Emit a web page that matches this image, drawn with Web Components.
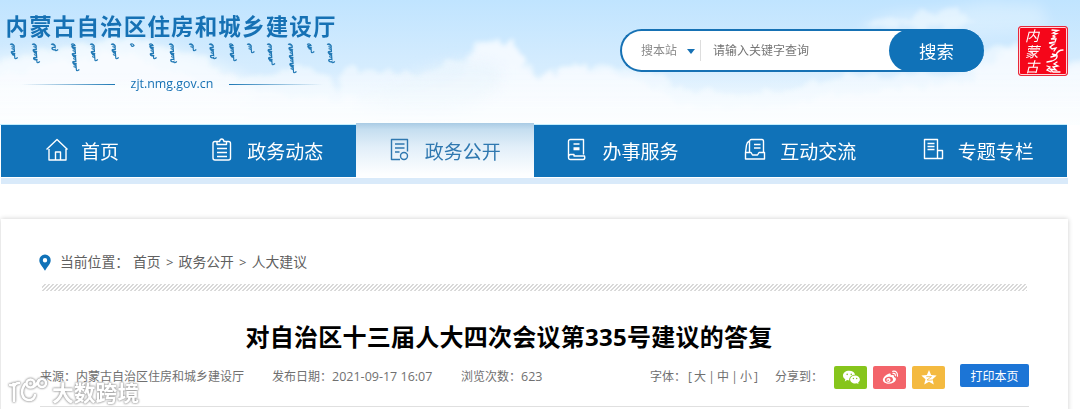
<!DOCTYPE html>
<html lang="zh-CN">
<head>
<meta charset="utf-8">
<title>内蒙古自治区住房和城乡建设厅</title>
<style>
	html, body { margin: 0; height: 100%; }
	body {
		overflow: hidden;
		background: #fff;
		color: #555;
		font-family: "Open Sans", "Noto Sans CJK SC", sans-serif;
		font-size: 12px;
	}
</style>
</head>
<body>
<gov-page></gov-page>

<script>
// Crea el shadow root abierto a partir de un bloque de estilos + markup
function montar(el, html) {
	el.attachShadow({ mode: 'open' });
	const t = document.createElement('template');
	t.innerHTML = html;
	el.shadowRoot.appendChild(t.content.cloneNode(true));
}

/* Cielo con nubes de la cabecera */
class SkyBackdrop extends HTMLElement {
	constructor() {
		super();
		montar(this, `
			<style>
				:host { display: block; position: relative; height: 125px; overflow: hidden; }
				svg { position: absolute; left: 0; top: 0; }
				.content { position: relative; }
			</style>
			<svg width="1080" height="125" viewBox="0 0 1080 125">
				<defs>
					<linearGradient id="sky" x1="0" y1="0" x2="0" y2="1">
						<stop offset="0" stop-color="#c0e4ff"/><stop offset=".45" stop-color="#d2ebfe"/><stop offset="1" stop-color="#e6f4ff"/>
					</linearGradient>
					<linearGradient id="base" x1="0" y1="0" x2="0" y2="1">
						<stop offset="0" stop-color="#fcfeff" stop-opacity="0"/><stop offset="1" stop-color="#fcfeff" stop-opacity=".9"/>
					</linearGradient>
					<filter id="cloud" x="-5%" y="-20%" width="110%" height="140%">
						<feTurbulence type="fractalNoise" baseFrequency=".07" numOctaves="4" seed="8"/>
						<feDisplacementMap in="SourceGraphic" scale="18" xChannelSelector="R" yChannelSelector="G"/>
						<feGaussianBlur stdDeviation="2"/>
					</filter>
					<filter id="soft" x="-20%" y="-40%" width="140%" height="180%"><feGaussianBlur stdDeviation="7"/></filter>
				</defs>
				<rect width="1080" height="125" fill="url(#sky)"/>
				<g filter="url(#soft)" fill="#fcfeff">
					<path opacity=".55" d="M-20 60L50 48L110 42L165 46L215 62L250 80L240 150L-20 150Z"/>
					<path opacity=".3" d="M855 32Q885 10 920 12Q960 8 985 2L1040 5L1050 30L980 34Z"/>
				</g>
				<g filter="url(#cloud)" fill="#fcfeff">
					<path opacity=".55" d="M-20 66L20 58L48 48L100 42L130 38L160 46L200 56L225 74L262 76L300 66L325 74L340 90L346 68L380 70L422 76L446 60L460 62L468 54L478 42L496 40L515 42L524 62L540 76L575 64L612 66L650 72L676 88L728 92L790 90L840 76L960 74L985 48L1012 43L1050 62L1100 64L1100 160L-20 160Z"/>
					<path opacity=".55" d="M-20 80L60 62L120 52L180 74L225 90L262 92L340 100L440 88L462 70L480 46L496 42L514 44L526 68L542 78L576 66L620 74L650 84L680 104L760 112L830 96L900 88L970 82L990 58L1014 50L1050 68L1100 70L1100 160L-20 160Z"/>
					<path opacity=".4" d="M862 26L884 16L900 24L924 12L956 10L976 18L960 28Z"/>
				</g>
				<path d="M400 80Q460 50 500 66Q510 95 450 115Q380 118 355 104Z" fill="#e8f4fd" opacity=".7" filter="url(#soft)"/>
				<rect y="70" width="1080" height="55" fill="url(#base)"/>
				<rect y="124" width="1067" height="1" fill="#c3eefd"/>
			</svg>
			<div class="content"><slot></slot></div>
		`);
	}
}
customElements.define('sky-backdrop', SkyBackdrop);

/* Escritura vertical: un tallo con dientes a la izquierda y cola a la derecha */
class MongolLine extends HTMLElement {
	constructor() {
		super();
		const palabras = [[13, 15], [35, 18], [54, 6], [74, 27], [93, 16], [114, 14], [133, 2], [152, 14], [172, 18],
			[192, 6], [212, 14], [232, 17], [250, 8], [270, 20], [291, 28], [310, 8], [330, 19]];
		let trazos = '';
		palabras.forEach(([x, h], n) => {
			let d = `M${x - 3} 1.500q3-1.500 4 1`;
			let y = 2.5;
			let i = n;
			while (y < h - 1) {
				d += i % 4 === 3 ? 'q-4-.500-3 1.500q1.500 1.500 3 .5' : 'l-2.700-1m2.700 1l.150 2';
				y += 2;
				i++;
			}
			trazos += d + (h > 4 ? 'q0 2.500 3 0' : 'q-2 2-3-.500');
		});
		montar(this, `
			<style>:host { display: block; height: 31px; } svg { display: block; }</style>
			<svg width="345" height="31" viewBox="0 0 345 31" fill="none" stroke="#2279b5" stroke-width="1.2"><path d="${trazos}"/></svg>
		`);
	}
}
customElements.define('mongol-line', MongolLine);

class SiteBrand extends HTMLElement {
	constructor() {
		super();
		montar(this, `
			<style>
				:host { display: block; width: 345px; padding-top: 12px; color: #1671b4; }
				h1 { margin: 0 0 1px 5.500px; font-size: 22.500px; line-height: 30px; letter-spacing: 1.150px; font-weight: 700; white-space: nowrap; }
				.url { display: flex; align-items: center; justify-content: center; gap: 16px; height: 20px; margin-left: -1px; font-size: 12.400px; line-height: 20px; }
				i { width: 94px; height: 1px; background: linear-gradient(90deg, transparent, #1d78b5); }
				i:last-child { transform: scaleX(-1); }
			</style>
			<h1>内蒙古自治区住房和城乡建设厅</h1>
			<mongol-line></mongol-line>
			<div class="url"><i></i><span>zjt.nmg.gov.cn</span><i></i></div>
		`);
	}
}
customElements.define('site-brand', SiteBrand);

class SearchBox extends HTMLElement {
	constructor() {
		super();
		montar(this, `
			<style>
				:host {
					display: flex; box-sizing: border-box; width: 364px; height: 43px;
					border: 2px solid #1671b4; border-right: 0; border-radius: 22px; background: #fff;
					align-items: center; line-height: 20px;
				}
				.scope { margin-left: 19px; color: #8b8b8b; }
				.arrow { margin: 1px 5px 0 10px; border: 4px solid transparent; border-top: 5px solid #1671b4; border-bottom: 0; }
				.sep { width: 1px; height: 21px; background: #ddd; }
				.hint { margin-left: 12px; color: #757575; flex: 1; }
				button {
					width: 95px; height: 43px; margin: 0; padding: 0; border: 0; border-radius: 22px;
					background: #1072b8; color: #fff; font: 17.5px/43px "Noto Sans CJK SC", sans-serif;
				}
			</style>
			<span class="scope">搜本站</span><span class="arrow"></span><span class="sep"></span>
			<span class="hint">请输入关键字查询</span>
			<button>搜索</button>
		`);
	}
}
customElements.define('search-box', SearchBox);

/* Sello rojo */
class RedSeal extends HTMLElement {
	constructor() {
		super();
		montar(this, `
			<style>
				:host {
					display: flex; box-sizing: border-box; width: 50px; height: 50px; padding: 1px 3px 0 6px;
					border: 1px solid #e8283a; border-radius: 3px; box-shadow: inset 0 0 0 1px #ffd5d8;
					background: #f5061a; color: #fff; justify-content: space-between;
				}
				.han { display: flex; flex-direction: column; font: italic 14px/15.5px "Noto Sans CJK SC", sans-serif; }
				svg { width: 20px; height: 47px; }
			</style>
			<div class="han"><span>内</span><span>蒙</span><span>古</span></div>
			<svg viewBox="0 0 20 47" fill="none" stroke="#fff" stroke-width="1.3" stroke-linecap="round">
				<path d="M8 2L14 2.500L9 5L13 5.500L9 8L11 9L7 11L12 11L11 14L5 15L10 16L6 19L8 21L12 20L10 23M19 22Q14 22 12 27L8 26L11 28L7 29M13 27Q14 31 8 33L3 34M13 34L10 36L14 38L9 39L12 42L6 41L9 44L16 44M3 38L6 39L3 42L7 44"/>
			</svg>
		`);
	}
}
customElements.define('red-seal', RedSeal);

/* Iconos del menú, todos en una rejilla de 24x24 */
const ICONOS = {
	home: '<path d="M1.5 11.5L12 1.5L22.5 11.5M4 11V22H21V11M10.500 22V14H15.5V22"/>',
	clip: '<path d="M5.500 3.5H4Q2 3.5 2 5.5V20Q2 22 4 22H17.5Q19.500 22 19.500 20V5.5Q19.500 3.5 17.500 3.5H16M6 6.5V3.5H8.500Q9 1 10.750 1Q12.500 1 13 3.5H15.500V6.5ZM6 10.5H16M6 14.5H16M6 18.5H16"/>',
	doc: '<path d="M11 21.5H2.500V1.5H18.5V13.5M6 6H15.500M6 10H15.500M6 14H10.500"/><circle cx="15" cy="18" r="3.5"/>',
	book: '<path d="M2.5 19V3.5Q2.5 1.5 4.5 1.5H17.5V16.5M7.5 6H13.5M7.5 10H13.5M7.5 11.500H13.500M4.5 16.5H8V18H18.5Q19.5 21.5 17 21.5H4.5Q2.5 21.5 2.5 19Q2.5 16.5 4.5 16.5"/>',
	mail: '<path d="M5.500 14V4Q5.500 1.5 7.500 1.5H18Q19.500 1.5 19.500 3.5V14.500M5.500 3Q3 4 2.5 7L1.5 14.500V21H20.5V14.500H15L13.5 17H8.5L7 14.500H1.5M10 6.5H16.5M10 10H16.5"/>',
	news: '<path d="M15.5 20.5H2.5V1.5H15.5V20.5M15.5 12.5H20.500V20.5H15.5M5.5 5.500H12.5M5.5 8.5H12.5M5.5 11.500H12.500"/>'
};

class NavItem extends HTMLElement {
	constructor() {
		super();
		montar(this, `
			<style>
				:host { display: flex; width: 177.67px; flex: none; height: 52px; box-sizing: border-box; align-items: center; padding-left: 32.5px; color: #fff; }
				:host([wide]) { padding-left: 44px; }
				:host([active]) { height: 54px; margin-top: -2px; padding-top: 2px; color: #2f78b0; background: linear-gradient(#a9cbe4, #c5def0 12%, #e2eff9 45%, #fdfeff 95%); }
				svg { width: 24px; height: 24px; margin: -2px 12px 0 0; flex: none; fill: none; stroke: currentColor; stroke-width: 1.4; stroke-linejoin: round; }
				span { font: 19px/28px "Noto Sans CJK SC", sans-serif; white-space: nowrap; }
			</style>
			<svg viewBox="0 0 24 24">${ICONOS[this.getAttribute('icon')]}</svg>
			<span><slot></slot></span>
		`);
	}
}

class NavBar extends HTMLElement {
	constructor() {
		super();
		montar(this, `
			<style>
				:host { display: flex; width: 1066px; height: 52px; margin-left: 1px; background: #1072b8; position: relative; }
				.tira { position: absolute; left: 0; right: -1px; top: 53px; height: 5.500px; background: #d9eafa; }
			</style>
			<slot></slot><div class="tira"></div>
		`);
	}
}
customElements.define('nav-bar', NavBar);

class BreadCrumb extends HTMLElement {
	constructor() {
		super();
		montar(this, `
			<style>
				:host { display: flex; align-items: center; height: 24px; font-size: 13.8px; line-height: 24px; color: #606060; white-space: pre; }
				svg { width: 12px; height: 17px; margin: 0 9px 0 -1px; }
				.label { width: 73px; }
				b { font-weight: 400; font-size: 13px; width: 18px; text-align: center; }
			</style>
			<svg viewBox="0 0 12 17"><path fill="#1072b8" fill-rule="evenodd" d="M6 .5A5.6 5.6 0 0 1 11.7 6.2C11.7 10 8 13 6 16.8C4 13 .3 10 .3 6.2A5.6 5.6 0 0 1 6 .5ZM6 4A2.2 2.2 0 1 0 6 8.4A2.2 2.2 0 0 0 6 4Z"/></svg>
			<span class="label">当前位置：</span><span>首页</span><b>&gt;</b><span>政务公开</span><b>&gt;</b><span>人大建议</span>
		`);
	}
}
customElements.define('bread-crumb', BreadCrumb);

class ShareButton extends HTMLElement {
	constructor() {
		super();
		const dibujos = {
			wechat: ['#86c51c', '<path fill="#fff" d="M8 2C3.8 2 1 4.4 1 7.4C1 9.2 2 10.6 3.6 11.6L3 14L5.6 12.5L8 12.9C7.6 9 11 6.4 14.6 6.5C14 3.8 11.3 2 8 2Z"/><path fill="#fff" d="M14.6 7.3C11.2 7.3 9 9.4 9 11.7C9 14.2 11.5 16.2 14.6 16.2L16.5 15.9L18.5 17L18 15.2C19.2 14.3 20 13.1 20 11.7C20 9.4 17.6 7.3 14.6 7.3Z"/><g fill="#86c51c"><circle cx="5.7" cy="6" r=".9"/><circle cx="10.3" cy="6" r=".9"/><circle cx="12.7" cy="10.6" r=".8"/><circle cx="16.4" cy="10.6" r=".8"/></g>'],
			weibo: ['#f3646a', '<path fill="#fff" d="M8.4 5.3C10 4.7 11.3 5.2 10.8 7.2C13.5 6.2 15.2 7 14.4 8.9C16.5 9.6 17.2 11 16.4 12.7C15.3 15.2 12.2 16.7 8.8 16.7C5 16.7 2 14.9 2 12.2C2 9.8 5.5 6.2 8.4 5.3Z"/><ellipse cx="8.8" cy="12" rx="4.6" ry="3.2" fill="#f3646a" transform="rotate(-8 8.8 12)"/><circle cx="8.3" cy="12.3" r="2.3" fill="#fff"/><circle cx="7.9" cy="12.7" r=".9" fill="#f3646a"/><path fill="none" stroke="#fff" stroke-width="1.3" stroke-linecap="round" d="M13 2.6Q18.7 1.6 18.4 8M13.3 5Q16.3 4.5 16 7.5"/>'],
			qzone: ['#f4ba40', '<path fill="#fff" d="M10 1L12.4 6.8L18.6 7.3L14 11.4L15.400 17.500L10 14.400L4.600 17.500L6 11.4L1.400 7.3L7.6 6.8Z"/><path fill="none" stroke="#f4ba40" stroke-width=".9" d="M7 8.6H12.8L7.8 12.3Q10 12.9 14 12.3"/>']
		};
		const [color, d] = dibujos[this.getAttribute('kind')];
		montar(this, `
			<style>
				:host { display: flex; width: 33px; height: 23px; border-radius: 2px; background: ${color}; align-items: center; justify-content: center; }
				svg { width: 18px; height: 16px; }
			</style>
			<svg viewBox="0 0 20 18">${d}</svg>
		`);
	}
}
customElements.define('share-button', ShareButton);

class ArticleMeta extends HTMLElement {
	constructor() {
		super();
		montar(this, `
			<style>
				:host { display: flex; height: 24px; align-items: center; line-height: 24px; color: #707070; white-space: nowrap; }
				:host > span { padding-top: 2px; }
				.date { margin-left: 28px; width: 189px; }
				.num { font-size: 12.5px; }
				.views { width: 189px; }
				.size { display: flex; width: 125px; }
				.size b { font-weight: 400; width: 11px; text-align: center; }
				.size b.c { width: 8px; }
				.to { width: 59px; }
				.share { display: flex; gap: 6px; margin-top: 2px; }
				button { margin: 0 0 1px 15px; width: 69px; height: 23px; border: 0; border-radius: 2px; padding: 0; background: #1c75d6; color: #fff; font: 12px/24px "Noto Sans CJK SC", sans-serif; }
			</style>
			<span>来源：内蒙古自治区住房和城乡建设厅</span>
			<span class="date">发布日期：<span class="num">2021-09-17 16:07</span></span>
			<span class="views">浏览次数：<span class="num">623</span></span>
			<span class="size">字体：<b class="c">[</b><span>大</span><b>|</b><span>中</span><b>|</b><span>小</span><b class="c">]</b></span>
			<span class="to">分享到：</span>
			<div class="share"><share-button kind="wechat"></share-button><share-button kind="weibo"></share-button><share-button kind="qzone"></share-button></div>
			<button>打印本页</button>
		`);
	}
}
customElements.define('article-meta', ArticleMeta);

/* Marca de agua que va encima del contenido */
class WaterMark extends HTMLElement {
	constructor() {
		super();
		montar(this, `
			<style>
				:host { position: absolute; left: 8px; top: 373px; display: flex; align-items: center; filter: drop-shadow(0 0 1px #999) drop-shadow(0 0 .6px #aaa); color: #fff; }
				svg { width: 42px; height: 30px; margin-right: 2px; }
				span { font: 700 21.8px/30px "Noto Sans CJK SC", sans-serif; padding-top: 4px; }
			</style>
			<svg viewBox="0 0 42 30" fill="none" stroke="#fff" stroke-width="2.6" stroke-linecap="round">
				<path d="M2 10Q5 11 6 8V26M6 12Q7 8 11 8M17 9Q14 13 14 18Q15 25 21 25Q26 25 27 20"/><circle cx="22.500" cy="8.500" r="4"/><circle cx="34" cy="8" r="4"/><path d="M25 12Q29 10 31 5"/>
			</svg>
			<span>大数跨境</span>
		`);
	}
}
customElements.define('water-mark', WaterMark);

class GovPage extends HTMLElement {
	constructor() {
		super();
		montar(this, `
			<style>
				:host { display: block; height: 409px; position: relative; overflow: hidden; }
				.head { display: flex; height: 125px; align-items: flex-start; }
				search-box { margin: 29px 0 0 275px; }
				red-seal { margin: 26px 0 0 34px; }
				main {
					box-sizing: border-box; width: 1067px; height: 220px; margin: 42px 0 0 1px; padding: 31px 39px 0;
					background: #fff; box-shadow: 0 0 5px rgba(0, 0, 0, .2);
				}
				.trama { height: 7px; margin: 10px 2px 0 2px; background: repeating-linear-gradient(135deg, #fff 0 1.7px, #d9d9d9 1.7px 2.83px); }
				h2 { margin: 29px 0 0 205.500px; font-size: 24px; line-height: 34px; font-weight: 700; color: #000; white-space: nowrap; letter-spacing: .25px; }
				article-meta { margin-top: 10px; }
				.linea { height: 1px; margin-top: 18px; background: #e0e0e0; }
			</style>
			<sky-backdrop>
				<div class="head"><site-brand></site-brand><search-box></search-box><red-seal></red-seal></div>
			</sky-backdrop>
			<nav-bar>
				<nav-item icon="home" wide>首页</nav-item>
				<nav-item icon="clip">政务动态</nav-item>
				<nav-item icon="doc" active>政务公开</nav-item>
				<nav-item icon="book">办事服务</nav-item>
				<nav-item icon="mail">互动交流</nav-item>
				<nav-item icon="news">专题专栏</nav-item>
			</nav-bar>
			<main>
				<bread-crumb></bread-crumb>
				<div class="trama"></div>
				<h2>对自治区十三届人大四次会议第335号建议的答复</h2>
				<article-meta></article-meta>
				<div class="linea"></div>
			</main>
			<water-mark></water-mark>
		`);
	}
}
customElements.define('nav-item', NavItem);
customElements.define('gov-page', GovPage);
</script>
</body>
</html>
